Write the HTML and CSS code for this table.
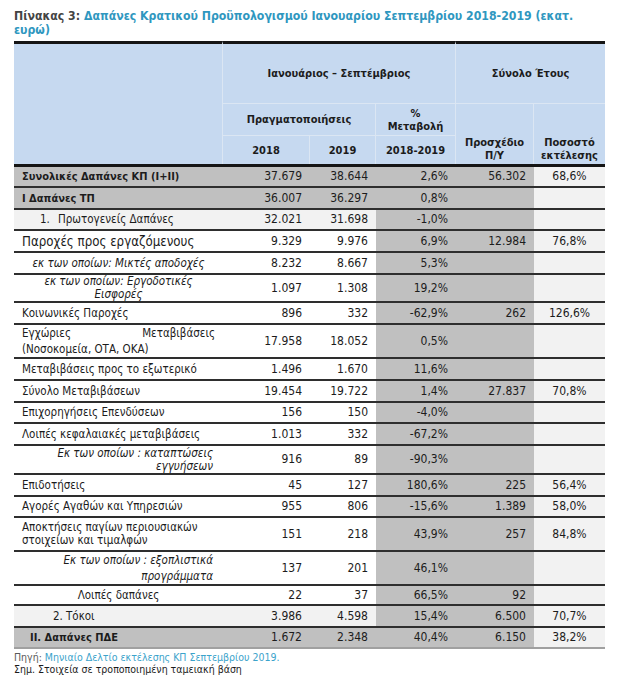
FILE: index.html
```html
<!DOCTYPE html>
<html lang="el">
<head>
<meta charset="utf-8">
<title>Πίνακας 3</title>
<link rel="stylesheet" href="styles.css">
</head>
<body>
<div class="page">
  <div class="caption"><span class="cap-label">Πίνακας 3:</span> <span class="cap-text">Δαπάνες Κρατικού Προϋπολογισμού Ιανουαρίου Σεπτεμβρίου 2018-2019 (εκατ.<br>ευρώ)</span></div>
  <table class="budget">
    <colgroup>
      <col class="c-label"><col class="c-y1"><col class="c-y2"><col class="c-pct"><col class="c-draft"><col class="c-rate">
    </colgroup>
    <thead>
      <tr class="hr1">
        <th class="blank" rowspan="3"></th>
        <th class="grp grp-a" colspan="3">Ιανουάριος – Σεπτέμβριος</th>
        <th class="grp" colspan="2">Σύνολο Έτους</th>
      </tr>
      <tr class="hr2">
        <th class="sub-h sep-r" colspan="2">Πραγματοποιήσεις</th>
        <th class="sub-h sep-r">%<br>Μεταβολή</th>
        <th class="low sep-r" rowspan="2">Προσχέδιο<br>Π/Υ</th>
        <th class="low" rowspan="2">Ποσοστό<br>εκτέλεσης</th>
      </tr>
      <tr class="hr3">
        <th class="sep-r">2018</th>
        <th class="sep-r">2019</th>
        <th class="sep-r">2018-2019</th>
      </tr>
    </thead>
    <tbody>
      <tr class="total h24"><td class="lbl">Συνολικές Δαπάνες ΚΠ (Ι+ΙΙ)</td><td class="n">37.679</td><td class="n">38.644</td><td class="g">2,6%</td><td class="g">56.302</td><td class="rate">68,6%</td></tr>
      <tr class="total h22"><td class="lbl">Ι Δαπάνες ΤΠ</td><td class="n">36.007</td><td class="n">36.297</td><td class="g">0,8%</td><td class="g"></td><td class="rate"></td></tr>
      <tr class="light h21"><td class="lbl ind1"><span class="num-mark">1.</span>Πρωτογενείς Δαπάνες</td><td class="n">32.021</td><td class="n">31.698</td><td class="g">-1,0%</td><td class="g"></td><td class="rate"></td></tr>
      <tr class="h22"><td class="lbl big">Παροχές προς εργαζόμενους</td><td class="n">9.329</td><td class="n">9.976</td><td class="g">6,9%</td><td class="g">12.984</td><td class="rate">76,8%</td></tr>
      <tr class="h22"><td class="lbl it ctr">εκ των οποίων: Μικτές αποδοχές</td><td class="n">8.232</td><td class="n">8.667</td><td class="g">5,3%</td><td class="g"></td><td class="rate"></td></tr>
      <tr class="h28"><td class="lbl it ctr">εκ των οποίων: Εργοδοτικές<br>Εισφορές</td><td class="n">1.097</td><td class="n">1.308</td><td class="g">19,2%</td><td class="g"></td><td class="rate"></td></tr>
      <tr class="h22"><td class="lbl">Κοινωνικές Παροχές</td><td class="n">896</td><td class="n">332</td><td class="g">-62,9%</td><td class="g">262</td><td class="rate">126,6%</td></tr>
      <tr class="h33"><td class="lbl tall"><span class="spread"><span>Εγχώριες</span><span>Μεταβιβάσεις</span></span>(Νοσοκομεία, ΟΤΑ, ΟΚΑ)</td><td class="n">17.958</td><td class="n">18.052</td><td class="g">0,5%</td><td class="g"></td><td class="rate"></td></tr>
      <tr class="h22"><td class="lbl">Μεταβιβάσεις προς το εξωτερικό</td><td class="n">1.496</td><td class="n">1.670</td><td class="g">11,6%</td><td class="g"></td><td class="rate"></td></tr>
      <tr class="h22"><td class="lbl">Σύνολο Μεταβιβάσεων</td><td class="n">19.454</td><td class="n">19.722</td><td class="g">1,4%</td><td class="g">27.837</td><td class="rate">70,8%</td></tr>
      <tr class="h21"><td class="lbl">Επιχορηγήσεις Επενδύσεων</td><td class="n">156</td><td class="n">150</td><td class="g">-4,0%</td><td class="g"></td><td class="rate"></td></tr>
      <tr class="h22"><td class="lbl">Λοιπές κεφαλαιακές μεταβιβάσεις</td><td class="n">1.013</td><td class="n">332</td><td class="g">-67,2%</td><td class="g"></td><td class="rate"></td></tr>
      <tr class="h29"><td class="lbl it rgt">Εκ των οποίων : καταπτώσεις<br>εγγυήσεων</td><td class="n">916</td><td class="n">89</td><td class="g">-90,3%</td><td class="g"></td><td class="rate"></td></tr>
      <tr class="h22"><td class="lbl">Επιδοτήσεις</td><td class="n">45</td><td class="n">127</td><td class="g">180,6%</td><td class="g">225</td><td class="rate">56,4%</td></tr>
      <tr class="h21"><td class="lbl">Αγορές Αγαθών και Υπηρεσιών</td><td class="n">955</td><td class="n">806</td><td class="g">-15,6%</td><td class="g">1.389</td><td class="rate">58,0%</td></tr>
      <tr class="h34"><td class="lbl">Αποκτήσεις παγίων περιουσιακών<br>στοιχείων και τιμαλφών</td><td class="n">151</td><td class="n">218</td><td class="g">43,9%</td><td class="g">257</td><td class="rate">84,8%</td></tr>
      <tr class="h34"><td class="lbl it rgt tall">Εκ των οποίων : εξοπλιστικά<br>προγράμματα</td><td class="n">137</td><td class="n">201</td><td class="g">46,1%</td><td class="g"></td><td class="rate"></td></tr>
      <tr class="h20"><td class="lbl ctr">Λοιπές δαπάνες</td><td class="n">22</td><td class="n">37</td><td class="g">66,5%</td><td class="g">92</td><td class="rate"></td></tr>
      <tr class="light h22"><td class="lbl ind2"><span class="num-mark2">2.</span>Τόκοι</td><td class="n">3.986</td><td class="n">4.598</td><td class="g">15,4%</td><td class="g">6.500</td><td class="rate">70,7%</td></tr>
      <tr class="total last h21"><td class="lbl ind3">ΙΙ. Δαπάνες ΠΔΕ</td><td class="n">1.672</td><td class="n">2.348</td><td class="g">40,4%</td><td class="g">6.150</td><td class="rate">38,2%</td></tr>
    </tbody>
  </table>
  <div class="notes">
    <div class="src"><span class="src-label">Πηγή:</span> <span class="src-text">Μηνιαίο Δελτίο εκτέλεσης ΚΠ Σεπτεμβρίου 2019.</span></div>
    <div class="note">Σημ. Στοιχεία σε τροποποιημένη ταμειακή βάση</div>
  </div>
</div>
</body>
</html>
```

FILE: styles.css
```css
html, body {
  margin: 0;
  padding: 0;
  background: #ffffff;
}

body {
  font-family: "DejaVu Sans Condensed", "DejaVu Sans", "Liberation Sans", sans-serif;
  font-stretch: condensed;
  color: #1c1c1c;
}

.page {
  padding: 9px 0 0 14px;
  width: 591px;
}

.caption {
  font-size: 12.2px;
  font-weight: bold;
  line-height: 14px;
  margin-bottom: 4px;
}

.cap-label {
  color: #444444;
}

.cap-text {
  color: #2f97bf;
}

.budget {
  width: 591px;
  table-layout: fixed;
  border-collapse: separate;
  border-spacing: 0;
  font-size: 12px;
  line-height: 13px;
}

.c-label { width: 209px; }
.c-y1 { width: 87px; }
.c-y2 { width: 66px; }
.c-pct { width: 80px; }
.c-draft { width: 78px; }
.c-rate { width: 71px; }

.budget th {
  background: #c6d9f0;
  font-size: 11px;
  font-weight: bold;
  color: #1c1c1c;
  padding: 0;
  text-align: center;
  vertical-align: middle;
}

.hr1 th {
  border-top: 3px solid #151515;
}

.hr1 { height: 63px; }
.hr2 { height: 32px; }
.hr3 { height: 28px; }

.blank {
  border-right: 1px solid #dbe6f3;
}

.grp {
  border-bottom: 1px solid #dbe6f3;
}

.grp-a {
  border-right: 1px solid #dbe6f3;
}

.sub-h {
  border-bottom: 1px solid #dbe6f3;
}

.sep-r {
  border-right: 1px solid #dbe6f3;
}

.low {
  vertical-align: bottom !important;
  padding-bottom: 2px !important;
}

.budget td {
  padding: 0 8px;
  border-bottom: 2px solid #2e2e2e;
  vertical-align: middle;
  white-space: nowrap;
  background: #ffffff;
}

.budget td.lbl {
  font-size: 11.5px;
}

.budget tbody tr:first-child td {
  border-top: 3px solid #151515;
}

.budget td.n {
  text-align: right;
}

.budget td.g {
  text-align: right;
  background: #c0c0c0;
}

.budget td.rate {
  text-align: center;
  background: #f2f2f2;
}

.total td.lbl,
.total td.n {
  background: #c0c0c0;
}

.budget .total td.lbl {
  font-weight: bold;
  font-size: 11px;
}

.light td.lbl,
.light td.n {
  background: #f2f2f2;
}

.last td {
  border-bottom-color: #a0a0a0;
}

.h20 { height: 20px; }
.h21 { height: 21px; }
.h22 { height: 22px; }
.h24 { height: 24px; }
.h28 { height: 28px; }
.h29 { height: 29px; }
.h33 { height: 33px; }
.h34 { height: 34px; }

.budget td.lbl.big {
  font-size: 13.2px;
}

.lbl.it {
  font-style: italic;
}

.lbl.ctr {
  text-align: center;
}

.lbl.rgt {
  text-align: right;
  padding-right: 10px;
}

.lbl.tall {
  line-height: 16px;
}

.spread {
  display: flex;
  justify-content: space-between;
}

.ind1 {
  padding-left: 26px !important;
}

.num-mark {
  display: inline-block;
  width: 18px;
}

.ind2 {
  padding-left: 39px !important;
}

.num-mark2 {
  display: inline-block;
  width: 13px;
}

.ind3 {
  padding-left: 16px !important;
}

.notes {
  margin-top: 2px;
  font-size: 10.5px;
  line-height: 12px;
}

.src-label {
  color: #5a5a5a;
}

.src-text {
  color: #3ba3cb;
}

.note {
  color: #1c1c1c;
}
```
